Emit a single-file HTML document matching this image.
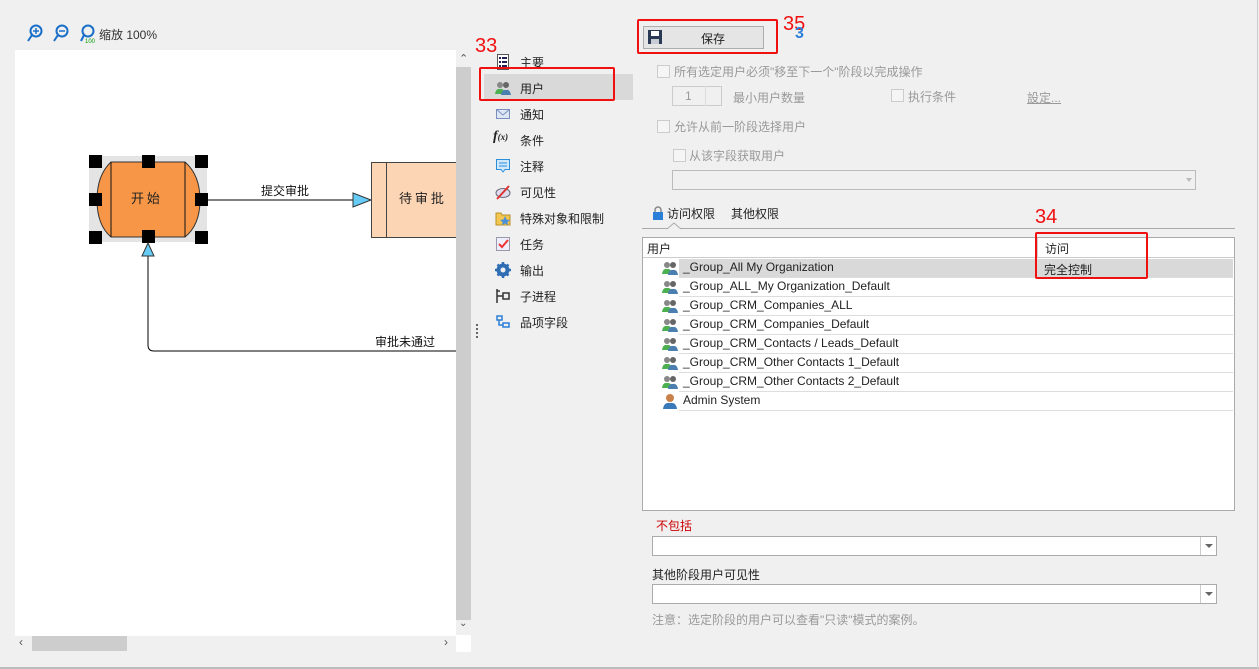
<!DOCTYPE html>
<html><head><meta charset="utf-8"><style>
*{margin:0;padding:0;box-sizing:border-box}
body{width:1259px;height:669px;background:#f0f0f0;font-family:"Liberation Sans","Noto Sans CJK SC",sans-serif;font-size:12px;color:#222;position:relative;overflow:hidden}
.a{position:absolute}
.red{position:absolute;border:2px solid #f01010;border-radius:2px}
.rn{position:absolute;color:#f01010;font-size:20px}
.nav{position:absolute;left:520px;font-size:12px}
.ic{position:absolute;left:495px;width:16px;height:16px}
.cb{position:absolute;width:13px;height:13px;border:1px solid #ccc;background:#f5f5f5}
.dis{position:absolute;color:#999}
.row{position:absolute;left:679px;width:554px;height:19px;border-bottom:1px solid #ddd;line-height:17px;padding-left:4px;font-size:12px}
.combo{position:absolute;background:#fff;border:1px solid #aaa}
.combo .dd{position:absolute;right:0;top:0;bottom:0;width:16px;border-left:1px solid #ccc}
.combo .dd:after{content:"";position:absolute;left:4px;top:7px;border:4px solid transparent;border-top:4px solid #666}
</style></head><body>
<svg class="a" style="left:26px;top:24px" width="70" height="20">
<g fill="none" stroke="#1a6fc9" stroke-width="2"><circle cx="10" cy="7" r="5.5"/><line x1="6" y1="11" x2="2" y2="17"/><circle cx="36" cy="7" r="5.5"/><line x1="32" y1="11" x2="28" y2="17"/><circle cx="62" cy="7" r="5.5"/><line x1="58" y1="11" x2="55" y2="17"/></g>
<g stroke="#1a6fc9" stroke-width="1.5"><line x1="7" y1="7" x2="13" y2="7"/><line x1="10" y1="4" x2="10" y2="10"/><line x1="33" y1="7" x2="39" y2="7"/></g>
<text x="59" y="19" font-size="6" fill="#090" font-family="Liberation Sans">100</text>
</svg>
<div class="a" style="left:99px;top:26px;font-size:12px;color:#333">缩放 100%</div>
<div class="a" style="left:15px;top:50px;width:441px;height:586px;background:#fff"></div>
<svg class="a" style="left:15px;top:50px" width="441" height="586">
<g transform="translate(-15,-50)">
<rect x="89" y="156" width="118" height="86" fill="#ddd" opacity=".8"/>
<path d="M111 162 H185 Q200 175 200 200 Q200 225 185 237 H111 Q97 225 97 200 Q97 175 111 162Z" fill="#f79646" stroke="#333"/>
<line x1="111" y1="162" x2="111" y2="237" stroke="#111"/><line x1="185" y1="162" x2="185" y2="237" stroke="#111"/>
<text x="131" y="203" font-size="13" fill="#222" font-family="Noto Sans CJK SC">开 始</text>
<g fill="#000"><rect x="89" y="155" width="13" height="13"/><rect x="142" y="155" width="13" height="13"/><rect x="195" y="155" width="13" height="13"/><rect x="89" y="193" width="13" height="13"/><rect x="195" y="193" width="13" height="13"/><rect x="89" y="231" width="13" height="13"/><rect x="142" y="230" width="13" height="13"/><rect x="195" y="231" width="13" height="13"/></g>
<line x1="207" y1="200" x2="353" y2="200" stroke="#000"/>
<path d="M353 193 L371 200 L353 207Z" fill="#66ccf5" stroke="#333"/>
<text x="261" y="195" font-size="12" fill="#111" font-family="Noto Sans CJK SC">提交审批</text>
<rect x="371.5" y="162.5" width="90" height="75" fill="#fcd5b4" stroke="#444"/>
<line x1="386.5" y1="162" x2="386.5" y2="238" stroke="#444"/>
<text x="399" y="203" font-size="13" fill="#222" font-family="Noto Sans CJK SC">待 审 批</text>
<path d="M148 256 V345 Q148 351 154 351 H456" fill="none" stroke="#000"/>
<path d="M142 256 L148 243 L154 256Z" fill="#66ccf5" stroke="#333"/>
<text x="375" y="346" font-size="12" fill="#111" font-family="Noto Sans CJK SC">审批未通过</text>
</g></svg>
<div class="a" style="left:456px;top:67px;width:15px;height:553px;background:#cdcdcd"></div>
<div class="a" style="left:459px;top:52px;color:#555;font-size:11px">&#8963;</div>
<div class="a" style="left:459px;top:618px;color:#555;font-size:10px">&#8964;</div>
<div class="a" style="left:32px;top:636px;width:95px;height:15px;background:#cdcdcd"></div>
<div class="a" style="left:19px;top:635px;color:#555;font-size:12px">‹</div>
<div class="a" style="left:444px;top:635px;color:#555;font-size:12px">›</div>
<div class="a" style="left:456px;top:635px;width:15px;height:17px;background:#fff"></div>
<div class="a" style="left:476px;top:324px;width:2px;height:14px;border-left:2px dotted #666"></div>
<div class="a" style="left:484px;top:74px;width:149px;height:26px;background:#d9d9d9"></div>
<svg class="ic" style="top:54px" viewBox="0 0 16 16"><rect x="2.5" y=".5" width="11" height="15" fill="#fff" stroke="#555"/><g fill="#225"><rect x="4" y="3" width="2" height="2"/><rect x="7" y="3" width="5" height="2"/><rect x="4" y="7" width="2" height="2"/><rect x="7" y="7" width="5" height="2"/><rect x="4" y="11" width="2" height="2"/><rect x="7" y="11" width="5" height="2"/></g></svg>
<div class="nav" style="top:54px">主要</div>
<svg class="ic" style="top:80px" viewBox="0 0 16 16"><circle cx="5" cy="5" r="3" fill="#888"/><circle cx="11" cy="5" r="3" fill="#666"/><path d="M0 14 Q1 8 5 9 Q9 8 10 14Z" fill="#4caf50"/><path d="M6 15 Q7 9 11 10 Q15 9 16 15Z" fill="#4a7fb0"/></svg>
<div class="nav" style="top:80px">用户</div>
<svg class="ic" style="top:106px" viewBox="0 0 16 16"><rect x="1.5" y="3.5" width="13" height="9" fill="#dde6f5" stroke="#7a8fc0"/><path d="M1.5 3.5 L8 9 L14.5 3.5" fill="none" stroke="#7a8fc0"/></svg>
<div class="nav" style="top:106px">通知</div>
<div class="a" style="left:493px;top:129px;font-family:'Liberation Serif',serif;font-style:italic;font-weight:bold;font-size:14px">f<span style="font-size:9px">(x)</span></div>
<div class="nav" style="top:132px">条件</div>
<svg class="ic" style="top:158px" viewBox="0 0 16 16"><path d="M1.5 1.5 H14.5 V11.5 H10 L8 14 L6 11.5 H1.5Z" fill="#cfe8fb" stroke="#2b8fd9"/><line x1="4" y1="5" x2="12" y2="5" stroke="#2b8fd9"/><line x1="4" y1="8" x2="12" y2="8" stroke="#2b8fd9"/></svg>
<div class="nav" style="top:158px">注释</div>
<svg class="ic" style="top:184px" viewBox="0 0 16 16"><ellipse cx="8" cy="9" rx="7" ry="4.5" fill="#dde" stroke="#667"/><line x1="2" y1="15" x2="14" y2="2" stroke="#d33" stroke-width="2"/></svg>
<div class="nav" style="top:184px">可见性</div>
<svg class="ic" style="top:210px" viewBox="0 0 16 16"><path d="M1 3 H6 L7 5 H15 V15 H1Z" fill="#f3c64f" stroke="#b8902a"/><path d="M10 6 L11.5 9.5 L15 10 L12.5 12 L13 15 L10 13.5 L7 15 L7.5 12 L5 10 L8.5 9.5Z" fill="#4a90d9"/></svg>
<div class="nav" style="top:210px">特殊对象和限制</div>
<svg class="ic" style="top:236px" viewBox="0 0 16 16"><rect x="1.5" y="1.5" width="13" height="13" fill="#eef" stroke="#99a"/><path d="M4 8 L7 11 L13 4" fill="none" stroke="#e33" stroke-width="2"/></svg>
<div class="nav" style="top:236px">任务</div>
<svg class="ic" style="top:262px" viewBox="0 0 16 16"><circle cx="8" cy="8" r="5" fill="none" stroke="#2e6db4" stroke-width="3"/><g stroke="#2e6db4" stroke-width="2.5"><line x1="8" y1="0" x2="8" y2="16"/><line x1="0" y1="8" x2="16" y2="8"/><line x1="2.5" y1="2.5" x2="13.5" y2="13.5"/><line x1="13.5" y1="2.5" x2="2.5" y2="13.5"/></g><circle cx="8" cy="8" r="2.5" fill="#f0f0f0"/></svg>
<div class="nav" style="top:262px">输出</div>
<svg class="ic" style="top:288px" viewBox="0 0 16 16"><g fill="none" stroke="#333" stroke-width="1.5"><line x1="2" y1="1" x2="2" y2="15"/><line x1="2" y1="3" x2="5" y2="3"/><line x1="2" y1="8" x2="8" y2="8"/><rect x="8" y="5" width="6" height="6"/></g></svg>
<div class="nav" style="top:288px">子进程</div>
<svg class="ic" style="top:314px" viewBox="0 0 16 16"><g fill="none" stroke="#2b7fd9" stroke-width="1.5"><rect x="2" y="2" width="5" height="4"/><rect x="8" y="9" width="6" height="4"/><path d="M4 6 V11 H8"/></g></svg>
<div class="nav" style="top:314px">品项字段</div>
<div class="red" style="left:479px;top:67px;width:136px;height:34px"></div>
<div class="rn" style="left:475px;top:35px">33</div>
<div class="a" style="left:643px;top:26px;width:121px;height:23px;border:1px solid #adadad;background:#e5e5e5"></div>
<svg class="a" style="left:648px;top:30px" width="14" height="14" viewBox="0 0 14 14"><rect x="0" y="0" width="14" height="14" fill="#2a3a55"/><rect x="3" y="1" width="8" height="5" fill="#fff"/><rect x="3" y="9" width="8" height="5" fill="#c8ccd4"/></svg>
<div class="a" style="left:701px;top:30px">保存</div>
<div class="red" style="left:637px;top:19px;width:141px;height:35px"></div>
<div class="rn" style="left:783px;top:13px">35</div>
<div class="a" style="left:795px;top:25px;color:#2b7fd9;font-size:16px;font-weight:bold">3</div>
<div class="cb" style="left:657px;top:65px"></div><div class="dis" style="left:674px;top:63px">所有选定用户必须"移至下一个"阶段以完成操作</div>
<div class="a" style="left:672px;top:86px;width:50px;height:20px;border:1px solid #ccc;background:#f0f0f0"></div>
<div class="dis" style="left:685px;top:89px">1</div>
<div class="a" style="left:705px;top:86px;width:1px;height:20px;background:#ddd"></div>
<div class="dis" style="left:733px;top:89px">最小用户数量</div>
<div class="cb" style="left:891px;top:89px"></div><div class="dis" style="left:908px;top:88px">执行条件</div>
<div class="dis" style="left:1027px;top:89px;text-decoration:underline">設定...</div>
<div class="cb" style="left:657px;top:120px"></div><div class="dis" style="left:674px;top:118px">允许从前一阶段选择用户</div>
<div class="cb" style="left:673px;top:149px"></div><div class="dis" style="left:689px;top:147px">从该字段获取用户</div>
<div class="a" style="left:672px;top:170px;width:524px;height:20px;border:1px solid #bbb;background:#f0f0f0"></div>
<div class="a" style="left:1186px;top:178px;border:3px solid transparent;border-top:4px solid #bbb"></div>
<svg class="a" style="left:652px;top:206px" width="12" height="14" viewBox="0 0 12 14"><path d="M3 6 V4 A3 3 0 0 1 9 4 V6" fill="none" stroke="#888" stroke-width="1.5"/><rect x="1" y="6" width="10" height="8" fill="#2b7fd9"/></svg>
<div class="a" style="left:667px;top:205px">访问权限</div>
<div class="a" style="left:731px;top:205px">其他权限</div>
<div class="a" style="left:642px;top:228px;width:593px;height:1px;background:#aaa"></div>
<svg class="a" style="left:667px;top:222px" width="14" height="8"><path d="M0 7 L7 1 L14 7" fill="#f0f0f0" stroke="#aaa"/></svg>
<div class="a" style="left:642px;top:237px;width:593px;height:274px;background:#fff;border:1px solid #aaa"></div>
<div class="a" style="left:643px;top:238px;width:591px;height:20px;border-bottom:1px solid #ccc"></div>
<div class="a" style="left:1037px;top:238px;width:1px;height:20px;background:#ccc"></div>
<div class="a" style="left:647px;top:240px">用户</div>
<div class="a" style="left:1045px;top:240px">访问</div>
<div class="row" style="top:259px;background:#d9d9d9">_Group_All My Organization</div>
<div class="a" style="left:1044px;top:261px">完全控制</div>
<div class="row" style="top:278px">_Group_ALL_My Organization_Default</div>
<div class="row" style="top:297px">_Group_CRM_Companies_ALL</div>
<div class="row" style="top:316px">_Group_CRM_Companies_Default</div>
<div class="row" style="top:335px">_Group_CRM_Contacts / Leads_Default</div>
<div class="row" style="top:354px">_Group_CRM_Other Contacts 1_Default</div>
<div class="row" style="top:373px">_Group_CRM_Other Contacts 2_Default</div>
<div class="row" style="top:392px">Admin System</div>
<svg class="a" style="left:662px;top:261px" width="16" height="130" viewBox="0 0 16 130">
<defs><g id="g"><circle cx="5" cy="4" r="3" fill="#888"/><circle cx="11" cy="4" r="3" fill="#666"/><path d="M0 13 Q1 7 5 8 Q9 7 10 13Z" fill="#4caf50"/><path d="M6 14 Q7 8 11 9 Q15 8 16 14Z" fill="#4a7fb0"/></g></defs>
<use href="#g"/><use href="#g" y="19"/><use href="#g" y="38"/><use href="#g" y="57"/><use href="#g" y="76"/><use href="#g" y="95"/><use href="#g" y="114"/>
</svg>
<svg class="a" style="left:663px;top:393px" width="14" height="16" viewBox="0 0 14 16"><circle cx="7" cy="5" r="4" fill="#c9814a"/><path d="M0 16 Q1 9 7 10 Q13 9 14 16Z" fill="#3a7ab8"/></svg>
<div class="red" style="left:1035px;top:232px;width:113px;height:47px"></div>
<div class="rn" style="left:1035px;top:206px">34</div>
<div class="a" style="left:656px;top:517px;color:#c00">不包括</div>
<div class="combo" style="left:652px;top:536px;width:565px;height:20px"><div class="dd"></div></div>
<div class="a" style="left:652px;top:566px">其他阶段用户可见性</div>
<div class="combo" style="left:652px;top:584px;width:565px;height:20px"><div class="dd"></div></div>
<div class="dis" style="left:652px;top:611px;color:#999">注意：选定阶段的用户可以查看"只读"模式的案例。</div>
<div class="a" style="left:0;top:667px;width:1259px;height:2px;background:#bbb"></div>
<div class="a" style="left:1257px;top:0;width:1px;height:669px;background:#ccc"></div>
</body></html>
